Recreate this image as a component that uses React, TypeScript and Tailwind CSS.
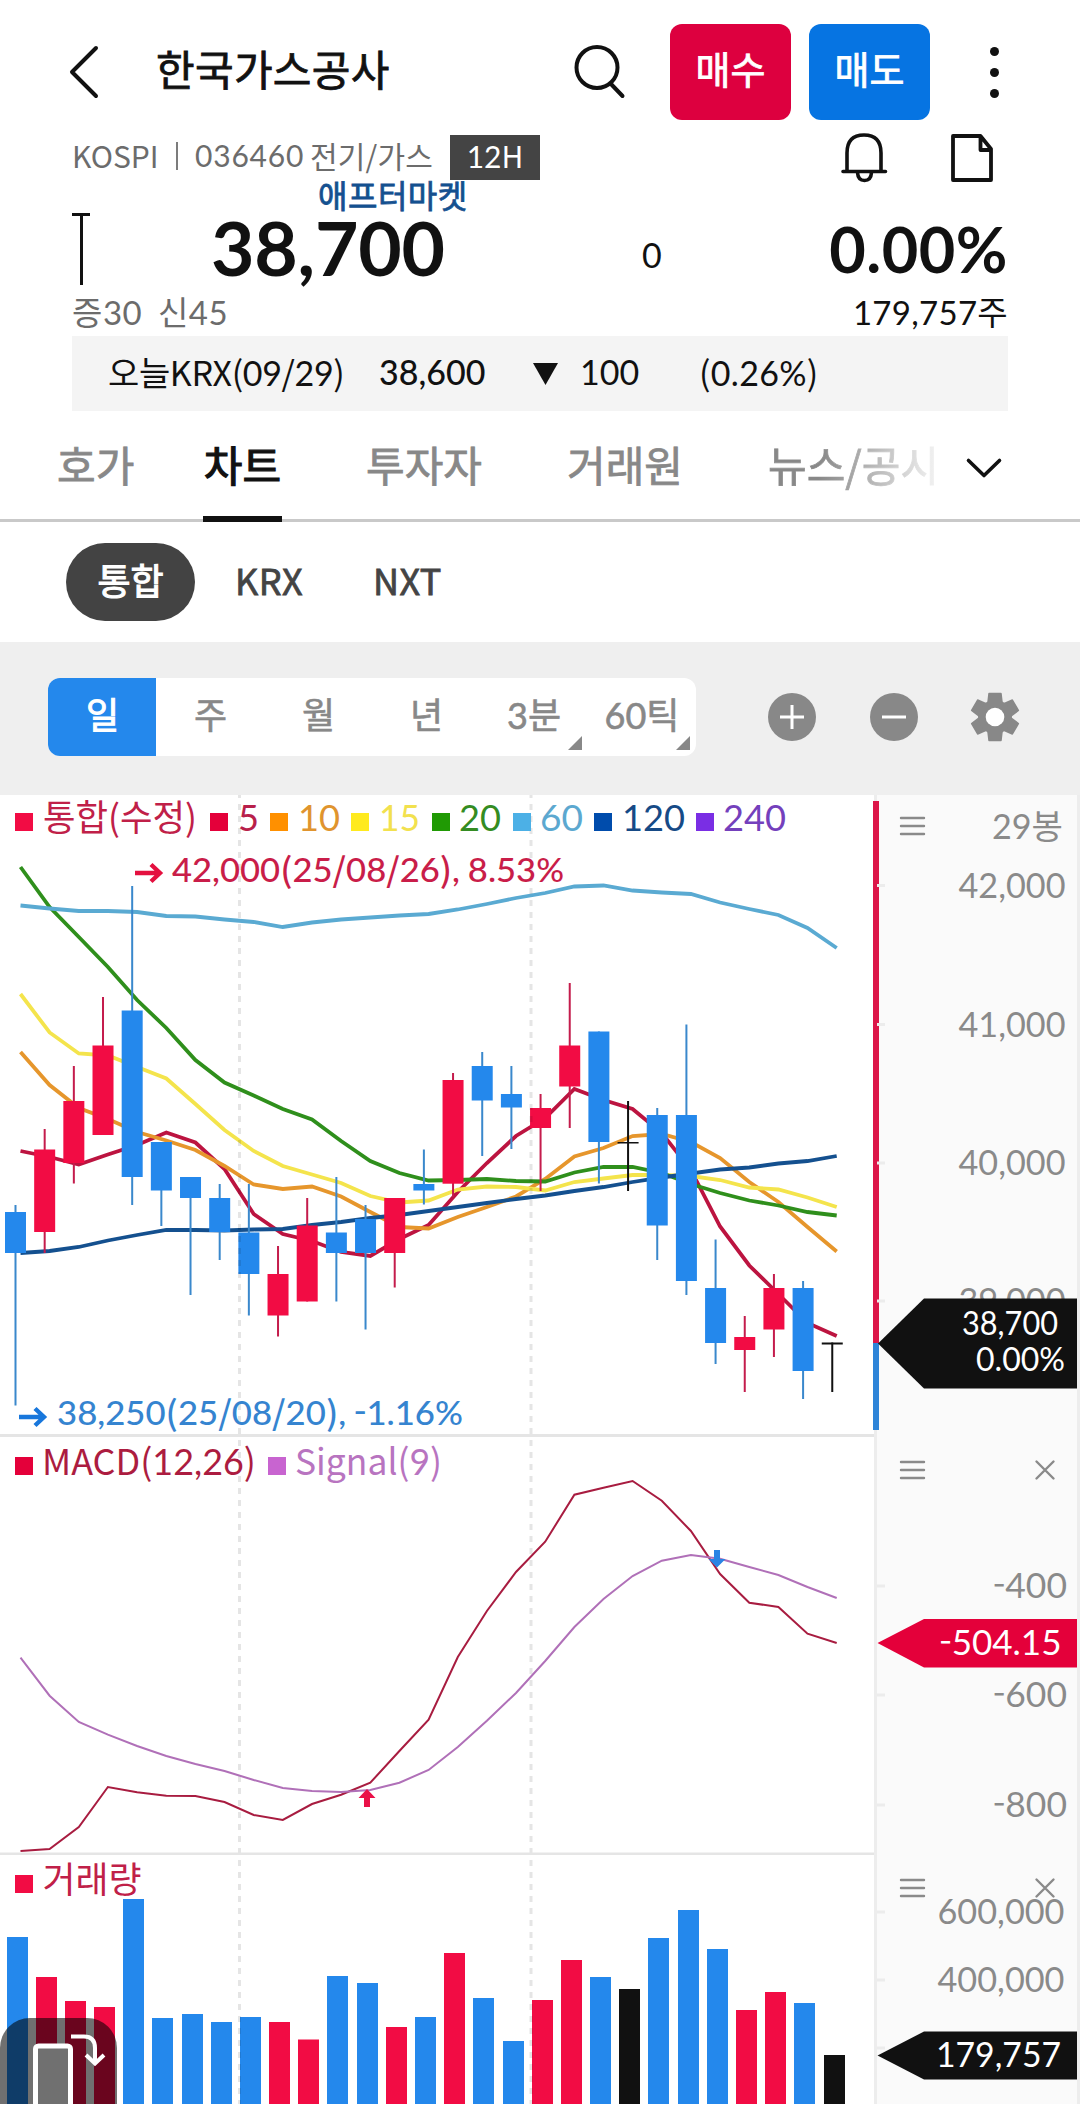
import React from "react";

const NOTO = "font-['Noto_Sans_CJK_KR',sans-serif]";
const LATO = "font-['Lato','Noto_Sans_CJK_KR',sans-serif]";
/* A weight between regular and bold */
const SEMI = "[-webkit-text-stroke:0.8px_currentColor]";

const isNumeric = (s: string) => /^[0-9.,%]+$/.test(s);
const pieces = (s: string) => s.split(/([0-9.,%]+|-)/).filter(Boolean);

/* Hangul and Latin letters in Noto, numerals in Lato */
function Mix({ children }: { children: string }) {
  return (
    <>
      {pieces(children).map((p, i) =>
        isNumeric(p) ? (
          <span key={i} className={`${LATO} leading-[0]`}>{p}</span>
        ) : (
          <React.Fragment key={i}>{p}</React.Fragment>
        ),
      )}
    </>
  );
}

type LabelProps = { x: number; y: number; w: number; size: number; fill: string; weight?: number; children: string };

function Label({ x, y, w, size, fill, weight = 400, children }: LabelProps) {
  const parts = pieces(children);
  return (
    <text
      x={x}
      y={y}
      fontSize={size}
      fill={fill}
      fontWeight={weight}
      textLength={w}
      lengthAdjust="spacingAndGlyphs"
      className={`${NOTO} whitespace-pre`}
    >
      {parts.map((p, i) => (
        <tspan
          key={i}
          dy={p === "-" ? -3 : parts[i - 1] === "-" ? 3 : undefined}
          className={isNumeric(p) ? LATO : NOTO}
        >
          {p}
        </tspan>
      ))}
    </text>
  );
}

const RED = "#f20c44";
const BLUE = "#2488ec";
const BLACK = "#111111";
const GRAY = "#8a8a8a";
const colorOf: Record<string, string> = { r: RED, b: BLUE, k: BLACK };

/* [color, body top, body bottom, high, low] */
const candles: [string, number, number, number, number][] = [
  ["b", 1212, 1253, 1205, 1405.5],
  ["r", 1149.5, 1232, 1129, 1253],
  ["r", 1101, 1163, 1066, 1183.5],
  ["r", 1045.5, 1135, 997, 1135],
  ["b", 1010.5, 1177, 886, 1205],
  ["b", 1142, 1190.5, 1142, 1226],
  ["b", 1177, 1198, 1177, 1295],
  ["b", 1198, 1232, 1184, 1260],
  ["b", 1232.5, 1274, 1184, 1315.5],
  ["r", 1274, 1315.5, 1246, 1336.5],
  ["r", 1225.5, 1301.5, 1198, 1301.5],
  ["b", 1232.5, 1253, 1177, 1301.5],
  ["b", 1219, 1253, 1205, 1329.5],
  ["r", 1198, 1253, 1198, 1287.5],
  ["b", 1184, 1190.5, 1149.5, 1204.5],
  ["r", 1080, 1183.7, 1073, 1197],
  ["b", 1066, 1100.5, 1052, 1156],
  ["b", 1094, 1107.5, 1066, 1149],
  ["r", 1108, 1128, 1094, 1191],
  ["r", 1045.5, 1086.5, 983, 1128],
  ["b", 1031.5, 1142, 1031.5, 1183.5],
  ["k", 1142, 1143.5, 1101, 1191],
  ["b", 1115, 1225.5, 1108, 1260],
  ["b", 1115, 1281, 1024.5, 1295],
  ["b", 1288, 1343, 1239.5, 1364],
  ["r", 1337, 1350, 1316, 1392],
  ["r", 1288, 1329.5, 1274, 1357],
  ["b", 1288, 1371, 1281, 1399],
  ["k", 1342.5, 1344.5, 1342.5, 1392],
];

const averages: { color: string; ys: number[] }[] = [
  { color: "#bc1440", ys: [1151, 1157, 1164.5, 1154.5, 1145, 1132.5, 1142.5, 1169, 1214, 1234, 1241, 1252, 1256, 1239, 1225, 1192, 1163, 1136, 1118, 1089, 1100, 1109, 1133, 1170, 1226.5, 1265.5, 1294, 1323, 1336] },
  { color: "#e6962c", ys: [1052, 1085, 1108, 1119, 1132, 1140.5, 1150, 1166, 1184.5, 1189, 1186.5, 1196.5, 1212, 1227, 1228.5, 1217, 1207, 1196.5, 1179, 1156.5, 1148, 1136, 1134, 1142, 1158, 1182, 1202, 1227, 1251.5] },
  { color: "#f4e44c", ys: [994, 1032.5, 1053.5, 1055.5, 1067, 1078.5, 1104, 1130, 1151, 1166, 1174.5, 1183, 1196, 1202.5, 1200.5, 1189.5, 1186.5, 1187, 1190.5, 1182, 1178.5, 1175, 1175, 1176, 1180, 1187.5, 1189.5, 1197.5, 1207] },
  { color: "#2f8f1c", ys: [867, 907, 937, 967, 1000, 1028, 1060, 1082.5, 1095.5, 1109, 1119.5, 1141, 1161, 1173, 1180.5, 1180, 1179, 1181, 1181.5, 1172.5, 1167, 1167, 1173, 1184, 1193, 1200.5, 1205.5, 1212, 1215.5] },
  { color: "#5aaad2", ys: [905.5, 908.5, 911, 911, 912, 916, 916.5, 919.5, 922, 927, 922.5, 919.5, 917.5, 915.5, 914, 909.5, 904, 898, 893, 886.5, 885.5, 890.5, 892.5, 894, 902.5, 909, 915, 928, 948] },
  { color: "#14508f", ys: [1253, 1251, 1247, 1240.5, 1235, 1230, 1230, 1230.5, 1229.5, 1229, 1225, 1222, 1218, 1215, 1211, 1207, 1203, 1199, 1195.5, 1191, 1187, 1182, 1177.5, 1173.5, 1169.5, 1167.5, 1163.5, 1161, 1156] },
];

const macd = [1851, 1849, 1827, 1787, 1792.3, 1795.7, 1796, 1802, 1815, 1820, 1804, 1794.7, 1782.7, 1751, 1719.7, 1657, 1611, 1572, 1541.7, 1494.7, 1487.7, 1481, 1500.7, 1531, 1574, 1602.7, 1607, 1633.7, 1643];
const signal = [1657.7, 1695.7, 1722, 1734.7, 1746, 1756, 1764, 1771, 1780, 1788, 1791, 1792, 1790, 1782.7, 1770, 1747, 1720.7, 1693, 1661, 1627, 1599, 1576, 1560.7, 1555, 1558.7, 1567, 1575, 1587, 1598];

const volumeTops = [1937, 1977, 2001, 2007, 1899, 2018, 2014, 2022, 2017, 2022, 2039.5, 1976, 1983, 2027, 2017, 1953, 1998, 2041, 2000, 1960, 1977, 1989, 1938, 1910, 1949, 2010, 1992, 2003, 2055];
const volumeColors = "brrrbbbbbrrbbrbrbbrrbkbbbrrbk";

const line = (ys: number[]) => ys.map((y, i) => `${(20.5 + i * 29.15).toFixed(1)},${y}`).join(" ");

function MonthLines({ top, bottom }: { top: number; bottom: number }) {
  const offset = top % 12;
  return (
    <g stroke="#000" strokeOpacity="0.1" strokeWidth="3" strokeDasharray="6 6" strokeDashoffset={offset}>
      <line x1="239.5" x2="239.5" y1={top} y2={bottom} />
      <line x1="531" x2="531" y1={top} y2={bottom} />
    </g>
  );
}

function Menu({ y }: { y: number }) {
  return (
    <path d={`M901 ${y - 8}H924M901 ${y}H924M901 ${y + 8}H924`} stroke={GRAY} strokeWidth="2.4" strokeLinecap="round" />
  );
}

function Close({ y }: { y: number }) {
  return (
    <path d={`M1036.500 ${y - 8.5}L1053.500 ${y + 8.5}M1053.500 ${y - 8.5}L1036.500 ${y + 8.5}`} stroke={GRAY} strokeWidth="2.4" strokeLinecap="round" />
  );
}

function Tick({ y }: { y: number }) {
  return <rect x="877" y={y - 1.5} width="8" height="3" fill="#ececec" />;
}

const priceLegend: [number, string, string, string, number, number][] = [
  [15, RED, "#c02048", "통합(수정)", 43, 154],
  [210, "#e4003a", "#b8204a", "5", 238, 21],
  [270, "#ff9000", "#e0942e", "10", 298, 42],
  [351, "#ffea1e", "#f2e14e", "15", 379, 41],
  [432, "#209a04", "#348c22", "20", 459, 42],
  [513, "#4cb0e6", "#5ca8d0", "60", 540, 43],
  [594, "#004cac", "#164a86", "120", 622, 63],
  [696, "#7a2ee4", "#7440bc", "240", 723, 63],
];

function PricePanel() {
  return (
    <section className="flex h-[642px]">
      <svg className="h-[642px] w-[874px] shrink-0" viewBox="0 795 874 642" fill="none">
        {averages.map((m) => (
          <polyline key={m.color} points={line(m.ys)} stroke={m.color} strokeWidth="3.8" />
        ))}
        {candles.map(([c, top, bottom, high, low], i) => {
          const x = 15.5 + i * 29.17;
          return (
            <g key={i} fill={colorOf[c]}>
              <rect x={x - 1} y={high} width="2" height={low - high} fill={c === "b" ? "#3a88cc" : c === "r" ? "#c41c4c" : BLACK} />
              <rect x={x - 10.5} y={top} width="21" height={bottom - top} />
            </g>
          );
        })}
        <MonthLines top={795} bottom={1434} />
        {priceLegend.map(([x, box, color, text, tx, w]) => (
          <g key={text}>
            <rect x={x} y="813" width="18" height="18" fill={box} />
            <Label x={tx} y={830.5} w={w} size={36} fill={color}>{text}</Label>
          </g>
        ))}
        <path d="M135 873H159M151 864.500L160 873L151 881.500" stroke="#e4103f" strokeWidth="4.400" />
        <Label x={172} y={881.5} w={392} size={33.5} weight={500} fill="#c91d49">42,000(25/08/26), 8.53%</Label>
        <path d="M19 1417H43M35 1408.500L44 1417L35 1425.500" stroke="#1877dc" strokeWidth="4.400" />
        <Label x={57} y={1425.3} w={406} size={33.5} weight={500} fill="#3584d0">38,250(25/08/20), -1.16%</Label>
        <rect x="0" y="1434" width="874" height="3" fill="#e5e5e5" />
      </svg>
      <svg className="h-[642px] w-[206px] shrink-0 overflow-visible" viewBox="874 795 206 642" fill="none">
        <rect x="874" y="795" width="206" height="642" fill="#fafafa" />
        <rect x="874" y="795" width="3" height="642" fill="#ededed" />
        <rect x="1077" y="795" width="3" height="642" fill="#ededed" />
        <rect x="873" y="801" width="6" height="542" fill="#dc1649" />
        <rect x="873" y="1343" width="6" height="87" fill="#2e84d8" />
        <Menu y={826} />
        <Label x={992} y={839.3} w={71} size={34} fill={GRAY}>29봉</Label>
        {[885.5, 1024.5, 1163, 1301].map((y, i) => (
          <g key={y}>
            <Tick y={y} />
            <Label x={958.5} y={y + 12} w={107} size={34} fill={GRAY}>{["42,000", "41,000", "40,000", "39,000"][i]}</Label>
          </g>
        ))}
        <polygon points="878,1343.500 924,1298.500 1077,1298.500 1077,1388.500 924,1388.500" fill={BLACK} />
        <Label x={962} y={1335} w={96} size={32.5} fill="#fff">38,700</Label>
        <Label x={976} y={1371} w={89} size={32.5} fill="#fff">0.00%</Label>
      </svg>
    </section>
  );
}

function MacdPanel() {
  return (
    <section className="flex h-[418px]">
      <svg className="h-[418px] w-[874px] shrink-0" viewBox="0 1437 874 418" fill="none">
        <MonthLines top={1437} bottom={1853} />
        <polyline points={line(macd)} stroke="#a81c40" strokeWidth="2" />
        <polyline points={line(signal)} stroke="#b070b8" strokeWidth="2" />
        <path d="M367 1789L375.500 1798H370V1807H364V1798H358.500Z" fill="#ea1048" />
        <path d="M717 1567.500L725.500 1559H720V1550H714V1559H708.500Z" fill="#2a84e4" />
        <rect x="15" y="1457" width="18" height="18" fill="#e4003a" />
        <Label x={42} y={1475} w={214} size={36} fill="#ac1c40">MACD(12,26)</Label>
        <rect x="268" y="1457" width="18" height="18" fill="#c864d0" />
        <Label x={295} y={1475} w={147} size={36} fill="#b874c0">Signal(9)</Label>
        <rect x="0" y="1852.500" width="874" height="3" fill="#e5e5e5" />
      </svg>
      <svg className="h-[418px] w-[206px] shrink-0" viewBox="874 1437 206 418" fill="none">
        <rect x="874" y="1437" width="206" height="418" fill="#fafafa" />
        <rect x="874" y="1437" width="3" height="418" fill="#ededed" />
        <rect x="1077" y="1437" width="3" height="418" fill="#ededed" />
        <Menu y={1470} />
        <Close y={1470} />
        {[1586, 1695, 1805].map((y, i) => (
          <g key={y}>
            <Tick y={y} />
            <Label x={993} y={y + 12} w={74} size={34} fill={GRAY}>{["-400", "-600", "-800"][i]}</Label>
          </g>
        ))}
        <polygon points="877.500,1643 924,1619 1077,1619 1077,1667.500 924,1667.500" fill="#e4003a" />
        <Label x={939.5} y={1655} w={122} size={34} fill="#fff">-504.15</Label>
      </svg>
    </section>
  );
}

function VolumePanel() {
  return (
    <section className="relative flex h-[249px]">
      <svg className="h-[249px] w-[874px] shrink-0" viewBox="0 1855 874 249" fill="none">
        {volumeTops.map((top, i) => (
          <rect key={i} x={7 + Math.floor(i * 29.18)} y={top} width="21" height={2104 - top} fill={colorOf[volumeColors[i]]} />
        ))}
        <MonthLines top={1855} bottom={2104} />
        <rect x="15" y="1875" width="18" height="18" fill={RED} />
        <Label x={42.5} y={1892.5} w={99} size={36} fill="#c02048">거래량</Label>
      </svg>
      <svg className="h-[249px] w-[206px] shrink-0" viewBox="874 1855 206 249" fill="none">
        <rect x="874" y="1855" width="206" height="249" fill="#fafafa" />
        <rect x="874" y="1855" width="3" height="249" fill="#ededed" />
        <rect x="1077" y="1855" width="3" height="249" fill="#ededed" />
        <Menu y={1888} />
        <Close y={1888} />
        <Tick y={1912} />
        <Label x={937.5} y={1924} w={127} size={34} fill={GRAY}>600,000</Label>
        <Tick y={1980} />
        <Label x={937.5} y={1992} w={127} size={34} fill={GRAY}>400,000</Label>
        <Tick y={2048} />
        <polygon points="877.500,2055.500 924,2031.500 1077,2031.500 1077,2079.500 924,2079.500" fill={BLACK} />
        <Label x={936} y={2067.3} w={125} size={34} fill="#fff">179,757</Label>
      </svg>
      <button className="absolute bottom-0 left-0 h-[86px] w-[117px] overflow-hidden rounded-t-[30px] bg-black/56">
        <svg className="h-[86px] w-[117px]" viewBox="0 2018 117 86" fill="none" stroke="#fff">
          <rect x="35.500" y="2046" width="35" height="80" rx="3" fill="#707070" strokeWidth="5" />
          <path d="M71 2036.500H84Q95 2036.500 95 2048V2063M86 2055L95 2063.500L104 2055" strokeWidth="4" />
        </svg>
      </button>
    </section>
  );
}

function Header() {
  return (
    <header className="flex h-[135px] items-center pt-[9px]">
      <svg className="ml-[68px] h-[56px] w-[32px]" viewBox="0 0 32 56" fill="none" stroke="#111" strokeWidth="4" strokeLinecap="round" strokeLinejoin="round">
        <path d="M28 4L4 28L28 52" />
      </svg>
      <h1 className={`ml-[56px] w-[390px] pb-[8px] text-[42px] leading-[60px] tracking-[0.3px] ${SEMI}`}>한국가스공사</h1>
      <svg className="ml-[24px] h-[56px] w-[56px]" viewBox="570 44 56 56" fill="none" stroke="#111" strokeWidth="4" strokeLinecap="round">
        <circle cx="597" cy="67.500" r="20.500" />
        <path d="M611 84L622.500 96" />
      </svg>
      <button className={`ml-[44px] h-[96px] w-[121px] rounded-[12px] bg-[#dd003f] pb-[9px] text-[38px] text-white ${SEMI}`}>매수</button>
      <button className={`ml-[18px] h-[96px] w-[121px] rounded-[12px] bg-[#0674e2] pb-[9px] text-[38px] text-white ${SEMI}`}>매도</button>
      <div className="ml-[60px] flex flex-col gap-[12px]">
        <i className="size-[9px] rounded-full bg-[#111]" />
        <i className="size-[9px] rounded-full bg-[#111]" />
        <i className="size-[9px] rounded-full bg-[#111]" />
      </div>
    </header>
  );
}

function Summary() {
  return (
    <section className="px-[72px]">
      <div className="flex h-[45px] items-center">
        <div className="flex h-[45px] w-[378px] items-center pb-[4px] whitespace-pre text-[#6c6c6c]">
          <span className="w-[104px] text-[30px] leading-[39px]">KOSPI</span>
          <i className="mt-[1px] h-[28px] w-[2px] bg-[#7c7c7c]" />
          <span className={`ml-[17px] w-[115px] text-[30px] leading-[39px] tracking-[0.8px] ${LATO}`}>036460</span>
          <span className="text-[30px] leading-[39px] tracking-[0.2px]">전기/가스</span>
        </div>
        <div className="flex h-[45px] w-[90px] items-center justify-center bg-[#444] pb-[4px] text-[30px] text-white"><span className="leading-[39px]"><Mix>12H</Mix></span></div>
        <svg className="ml-[300px] h-[52px] w-[48px] shrink-0" viewBox="840 130 48 52" fill="none" stroke="#111" strokeWidth="3.600" strokeLinecap="round">
          <path d="M847 168V151Q847 133 864 133Q881 133 881 151V168M843 169.500H885.500M857.500 170.500Q858 178.500 864.500 178.500Q871 178.500 871.500 170.500" />
        </svg>
        <svg className="ml-[62px] h-[52px] w-[44px] shrink-0" viewBox="950 130 44 52" fill="none" stroke="#111" strokeWidth="3.800" strokeLinejoin="round">
          <path d="M953 134H980.500L991 147V178H953ZM980.500 134V148H991" />
        </svg>
      </div>
      <p className={`ml-[246px] h-[29px] text-[32px] leading-[29px] tracking-[0.5px] text-[#14508f] ${SEMI}`}>애프터마켓</p>
      <div className={`flex h-[84px] items-center ${LATO}`}>
        <div className="mt-[4px] flex h-[72px] w-[18px] flex-col items-center self-start">
          <i className="h-[3px] w-[18px] bg-[#111]" />
          <i className="h-[69px] w-[3px] bg-[#111]" />
        </div>
        <strong className="ml-[121px] w-[431px] pb-[8px] text-[75px] leading-[75px] font-bold tracking-[-0.2px]">38,700</strong>
        <span className="w-[60px] pt-[7px] text-[34px] leading-[40px]">0</span>
        <strong className="ml-auto pb-[4px] text-[63px] leading-[70px] font-bold tracking-[0.5px]">0.00%</strong>
      </div>
      <div className="flex h-[43px] items-center justify-between pb-[6px] text-[33px] leading-[35px]">
        <span className="tracking-[0.5px] whitespace-pre text-[#6c6c6c]"><Mix>증30  신45</Mix></span>
        <span className="tracking-[0.3px]"><Mix>179,757주</Mix></span>
      </div>
      <div className="flex h-[75px] items-center bg-[#f4f4f4] pb-[4px] text-[34px] leading-[40px]">
        <span className="ml-[36px] w-[271px] tracking-[-0.35px] whitespace-nowrap"><Mix>오늘KRX(09/29)</Mix></span>
        <span className={`w-[154px] font-medium ${LATO}`}>38,600</span>
        <svg className="mt-[4px] h-[22px] w-[25px]" viewBox="0 0 25 22"><path d="M0 0H25L12.500 22Z" fill="#111" /></svg>
        <span className={`ml-[22px] w-[119px] ${LATO}`}>100</span>
        <span className="tracking-[0.3px]"><Mix>(0.26%)</Mix></span>
      </div>
    </section>
  );
}

function Tabs() {
  return (
    <nav className={`flex h-[111px] border-b-[3px] border-[#c9c9c9] text-[42px] leading-[105px] text-[#888] ${SEMI}`}>
      <span className="ml-[57px] w-[146px]">호가</span>
      <span className="z-10 h-[111px] w-[79px] border-b-[6px] border-[#111] text-center whitespace-nowrap text-[#111] [-webkit-text-stroke:1.2px_#111]">차트</span>
      <span className="ml-[84px] w-[201px]">투자자</span>
      <span className="w-[201px]">거래원</span>
      <span className="h-[105px] w-[166px] overflow-hidden bg-linear-to-r from-[#888] from-30% to-[#f0f0f0] bg-clip-text whitespace-nowrap text-transparent">뉴스/공시</span>
      <svg className="mt-[46px] ml-[31px] h-[22px] w-[38px]" viewBox="965 457 38 22" fill="none" stroke="#111" strokeWidth="3.600" strokeLinecap="round" strokeLinejoin="round">
        <path d="M968.500 460.500L984 475.500L999.500 460.500" />
      </svg>
    </nav>
  );
}

function Venues() {
  return (
    <div className={`flex h-[120px] items-center pl-[66px] text-[36px] leading-[50px] text-[#444] ${SEMI}`}>
      <span className="flex h-[78px] w-[129px] items-center justify-center rounded-full bg-[#434343] pb-[7px] text-white">
        <span className="[-webkit-text-stroke:1.1px_#fff]">통합</span>
      </span>
      <span className="ml-[40px] w-[138px] pb-[7px] tracking-[0.5px]">KRX</span>
      <span className="pb-[7px] tracking-[0.5px]">NXT</span>
    </div>
  );
}

function Toolbar() {
  return (
    <div className="flex h-[153px] items-center bg-[#efefef] pb-[3px] pl-[48px]">
      <div className="flex h-[78px] w-[648px] overflow-hidden rounded-[12px] bg-white text-[36px] leading-[71px] text-[#888] [-webkit-text-stroke:0.6px_currentColor]">
        <span className="w-[108px] bg-[#2488ec] pl-[1px] text-center text-white [-webkit-text-stroke:1px_#fff]">일</span>
        {["주", "월", "년"].map((t) => (
          <span key={t} className="w-[108px] pl-[1px] text-center">{t}</span>
        ))}
        {["3분", "60틱"].map((t) => (
          <span key={t} className="relative w-[108px] text-center whitespace-nowrap">
            <span><Mix>{t}</Mix></span>
            <svg className="absolute right-[6px] bottom-[6px] size-[14px]" viewBox="0 0 14 14"><path d="M14 0V14H0Z" fill="#888" /></svg>
          </span>
        ))}
      </div>
      <svg className="ml-[72px] size-[48px]" viewBox="0 0 48 48"><circle cx="24" cy="24" r="24" fill="#888" /><path d="M12 24H36M24 12V36" stroke="#fff" strokeWidth="3" /></svg>
      <svg className="ml-[54px] size-[48px]" viewBox="0 0 48 48"><circle cx="24" cy="24" r="24" fill="#888" /><path d="M12 24H36" stroke="#fff" strokeWidth="3" /></svg>
      <svg className="ml-[52px] size-[50px]" viewBox="-25 -25 50 50">
        {[0, 60, 120, 180, 240, 300].map((a) => (
          <path key={a} transform={`rotate(${a})`} d="M-6 -23.500H6L7 -15H-7Z" fill="#888" stroke="#888" strokeWidth="1.500" strokeLinejoin="round" />
        ))}
        <circle r="17" fill="#888" />
        <circle r="9.300" fill="#fff" />
      </svg>
    </div>
  );
}

export default function App() {
  return (
    <main className={`h-[2104px] w-[1080px] overflow-hidden bg-white text-[#111] ${NOTO}`}>
      <Header />
      <Summary />
      <Tabs />
      <Venues />
      <Toolbar />
      <PricePanel />
      <MacdPanel />
      <VolumePanel />
    </main>
  );
}
